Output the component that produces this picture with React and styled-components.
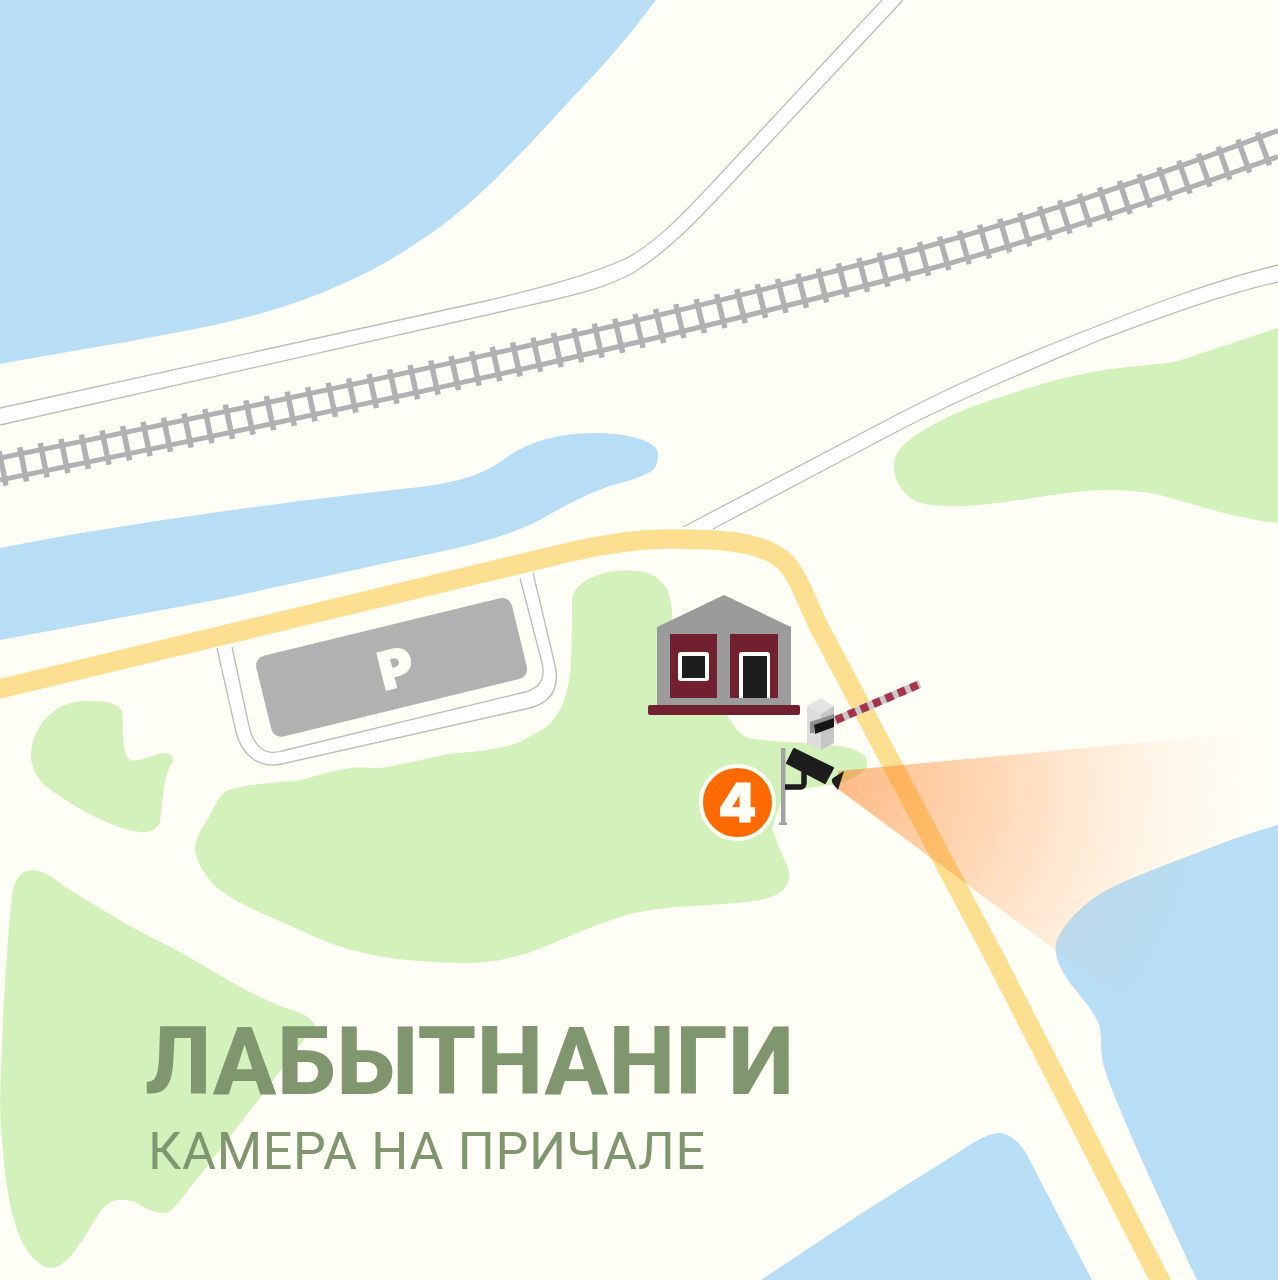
import styled, { createGlobalStyle } from "styled-components";

const GlobalStyle = createGlobalStyle`
  html, body { margin: 0; padding: 0; background: #fffef6; }
`;

const Canvas = styled.div`
  position: relative;
  width: 1278px;
  height: 1280px;
  overflow: hidden;
  background: #fffef6;
  font-family: "Roboto", "Liberation Sans", sans-serif;
`;

const MapArt = styled.svg`
  display: block;
  width: 1278px;
  height: 1280px;
`;

const Caption = styled.div`
  position: absolute;
  left: 145px;
  top: 1015px;
  color: #7f966f;
`;

const Title = styled.div`
  font-size: 94px;
  line-height: 94px;
  font-weight: 800;
  letter-spacing: 0.6px;
  white-space: nowrap;
`;

const Subtitle = styled.div`
  margin: 15px 0 0 3px;
  font-size: 52px;
  line-height: 56px;
  font-weight: 400;
  letter-spacing: 0.7px;
  white-space: nowrap;
`;

const Badge = styled.div`
  position: absolute;
  left: 699px;
  top: 764px;
  width: 69px;
  height: 69px;
  display: flex;
  align-items: center;
  justify-content: center;
  border: 4px solid #fffef6;
  border-radius: 50%;
  background: #ff6a00;
  color: #fffef6;
  font-family: "Inter", sans-serif;
  font-size: 54px;
  font-weight: 900;
  -webkit-text-stroke: 1px #fffef6;
`;

const WATER = "#b8def6";
const GREEN = "#d3f2bb";
const ROAD = "#fddf91";
const RAIL = "#b1b1b3";
const LINE = "#bcbcb8";
const MAROON = "#70202f";

const BAY =
  "M1278 825C1240 835 1205 850 1173 862C1150 871 1128 879 1107 890C1085 902 1065 922 1057 940C1053 952 1058 965 1068 980C1080 997 1095 1010 1100 1028C1102 1040 1100 1055 1105 1070C1120 1115 1165 1210 1197 1280H1278Z";

const Water = () => (
  <g fill={WATER}>
    <path d="M0 0H656C630 35 600 70 573 97C550 122 530 145 507 167C485 190 465 208 440 227C405 252 375 270 340 285C295 305 250 318 200 328C130 342 65 352 0 364Z" />
    <path d="M0 548C130 522 300 500 420 487C470 481 490 470 510 455C525 445 540 440 560 436C590 431 615 433 633 437C650 441 660 448 658 457C657 466 655 469 650 472C635 480 620 483 607 487C585 495 560 508 540 520C495 542 450 550 400 560C330 575 265 590 200 603C130 616 65 628 0 640Z" />
    <path d={BAY} />
    <path d="M761 1280L862 1213L962 1150C975 1141 988 1134 998 1133C1008 1133 1018 1140 1026 1153L1092 1280Z" />
  </g>
);

const Greens = () => (
  <g fill={GREEN}>
    <path d="M1278 328C1255 335 1235 343 1217 348C1190 357 1180 361 1167 363C1140 366 1110 368 1087 373C1050 380 1030 388 1000 397C975 405 950 415 933 425C910 437 893 450 894 467C894 482 905 497 920 503C935 507 950 506 967 506C990 505 1010 501 1033 498C1060 494 1085 490 1107 490C1130 490 1150 492 1167 497C1190 503 1210 510 1233 515C1250 519 1265 522 1278 523Z" />
    <path d="M572 600C574 578 610 566 645 572C662 577 671 590 672 610C672 650 705 690 727 715C733 725 738 733 748 738C770 742 790 742 807 743C825 745 845 745 858 751C870 757 870 768 860 774C850 780 840 783 830 785C810 788 795 789 785 791L772 828L780 850C785 862 791 870 789 880C785 892 775 897 760 900C730 905 695 905 667 908C650 910 635 912 620 917C605 922 590 928 577 933C555 942 535 952 513 957C495 962 480 963 467 963C440 963 400 960 383 957C345 950 320 940 300 930C275 918 235 905 213 884C205 875 195 860 195 849C195 840 200 830 210 815C215 805 220 795 226 791C240 785 270 783 300 780C320 775 335 770 350 768C360 767 370 768 380 768C400 765 420 760 443 755C460 752 475 752 487 750C505 747 515 745 527 738C540 731 548 727 553 720C562 710 570 690 571 660C572 640 572 620 572 600Z" />
    <path d="M31 753C33 725 55 702 83 701C100 700 118 702 122 711C124 725 120 750 130 760C140 763 155 753 165 753C174 754 175 760 171 765C164 775 163 800 160 822C157 830 150 833 140 832C110 828 70 805 43 784C36 775 30 765 31 753Z" />
    <path d="M33 870C22 870 14 878 12 895C6 950 2 1030 0 1103C2 1160 8 1200 14 1220C22 1250 38 1268 52 1268C70 1266 85 1235 100 1212C108 1200 120 1197 135 1202C145 1208 155 1214 165 1213C172 1212 177 1204 183 1197C220 1150 270 1085 315 1025C310 1015 298 1012 283 1007C240 990 205 965 167 945C130 928 95 905 67 888C55 880 45 870 33 870Z" />
  </g>
);

const ThinRoads = () => (
  <g fill="none">
    <g stroke="#ffffff" strokeWidth="15">
      <path d="M892.5 0L718 187.5C695 211 665 245 630 265.5C595 283 560 291 521 300L0 416.5" />
      <path d="M698 528L900 421.5C960 390 1030 361 1093 335C1155 311 1218 288 1278 273.5" />
      <path d="M224.5 648L242 729C248 750 262 762 282 757L528 700C546 695 553 683 549 664L527 575" />
    </g>
    <g stroke={LINE} strokeWidth="1.3">
      <path d="M882 0L713 182C690 206 660 240 627 258C590 275 540 288 490 300L0 408" />
      <path d="M903 0L723 193C700 217 670 250 633 273C600 290 580 293 553 300L0 425" />
      <path d="M683 527L900 413C960 382 1030 352 1087 330C1150 305 1215 280 1278 265" />
      <path d="M713 529L900 430C960 399 1030 370 1100 340C1160 318 1220 295 1278 282" />
      <path d="M217 648L236 732C242 755 258 769 282 764L530 708C552 702 560 688 555 665L533 573" />
      <path d="M232 647L249 726C254 747 265 756 282 751L525 692C540 688 546 678 542 663L520 578" />
    </g>
  </g>
);

const Rails = () => (
  <g fill="none" stroke={RAIL}>
    <path d="M0 469C160 437 400 386 540 354C680 322 800 292 920 260C1040 227 1160 187 1278 143.5" strokeWidth="35" strokeDasharray="5.5 15.5" />
    <path d="M0 458C160 426 400 375 540 343C680 311 800 281 920 248.5C1040 215 1160 175 1278 130.5" strokeWidth="5" />
    <path d="M0 480C160 448 400 397 540 365C680 333 800 303 920 271.5C1040 239 1160 199 1278 156.5" strokeWidth="5" />
  </g>
);

const Parking = () => (
  <g>
    <rect x="260" y="626" width="263" height="83" rx="10" fill="#b1b1b1" transform="rotate(-13.7 391 667)" />
    <text x="396" y="687" textAnchor="middle" fontFamily="Inter, sans-serif" fontWeight="900" fontSize="52" fill="#fffef6" stroke="#fffef6" strokeWidth="1.5" transform="rotate(-14 396 668)">
      P
    </text>
  </g>
);

const House = () => (
  <g>
    <path d="M657 627L724 595L791 627V705H657Z" fill="#9b9b9b" />
    <rect x="670" y="634" width="47" height="64" fill={MAROON} />
    <rect x="730" y="634" width="48" height="64" fill={MAROON} />
    <rect x="678" y="652" width="31" height="29" rx="3" fill="#fffef6" />
    <rect x="682" y="656" width="23" height="22" fill="#1d1d1d" />
    <path d="M739 698V655Q739 652 742 652H767Q770 652 770 655V698Z" fill="#fffef6" />
    <rect x="743" y="656" width="24" height="42" fill="#1d1d1d" />
    <rect x="648" y="705" width="152" height="10" rx="2" fill={MAROON} />
  </g>
);

const Barrier = () => (
  <g>
    <path d="M807 706L821 698L834 706L821 714Z" fill="#e4e4e4" />
    <path d="M807 706L821 714V750L807 743Z" fill="#dcdcdc" />
    <path d="M821 714L834 706V743L821 750Z" fill="#c6c6c6" />
    <path d="M834 721L920 684" stroke="#c9c9c9" strokeWidth="8" fill="none" />
    <path d="M836 720L920 684" stroke="#a8344c" strokeWidth="8" strokeDasharray="8 5.5" fill="none" />
    <path d="M810 722L834 714V720L814 727V733L810 733Z" fill="#8e8e8e" />
    <path d="M814 725L834 718V727L815 734Z" fill="#161616" />
  </g>
);

const Camera = () => (
  <g>
    <rect x="781" y="748" width="4.5" height="76" fill="#a3a3a3" />
    <rect x="779" y="822.5" width="8" height="2.5" fill="#a3a3a3" />
    <path d="M785 787H801C803 787 804 785 804 783V772" fill="none" stroke="#1d1d1d" strokeWidth="5.5" />
    <path d="M794 749L833 768L825 783L787 763Z" fill="#1d1d1d" stroke="#1d1d1d" strokeWidth="2" strokeLinejoin="round" />
    <path d="M844 771L833 778C831 780 832 782 833 784L838 790Z" fill="#1d1d1d" />
  </g>
);

const App = () => (
  <Canvas>
    <GlobalStyle />
    <MapArt viewBox="0 0 1278 1280" xmlns="http://www.w3.org/2000/svg">
      <defs>
        <radialGradient id="beamFade" gradientUnits="userSpaceOnUse" cx="838" cy="782" r="420">
          <stop offset="0" stopColor="#ff6a00" stopOpacity="0.46" />
          <stop offset="0.35" stopColor="#ff7a1a" stopOpacity="0.3" />
          <stop offset="0.75" stopColor="#ff8a3a" stopOpacity="0.08" />
          <stop offset="1" stopColor="#ff9a4a" stopOpacity="0" />
        </radialGradient>
      </defs>
      <Water />
      <Greens />
      <ThinRoads />
      <Rails />
      <path d="M-5 690L570 552C610 543 640 539 670 539C715 539 762 540 785 562C798 575 806 600 818 625L996 960L1165 1290" fill="none" stroke={ROAD} strokeWidth="19.5" />
      <Parking />
      <path d="M838 771L1278 730V1080L1150 1020L838 789Z" fill="url(#beamFade)" />
      <path d={BAY} fill={WATER} fillOpacity="0.55" />
      <House />
      <Barrier />
      <Camera />
    </MapArt>
    <Badge>4</Badge>
    <Caption>
      <Title>ЛАБЫТНАНГИ</Title>
      <Subtitle>КАМЕРА НА ПРИЧАЛЕ</Subtitle>
    </Caption>
  </Canvas>
);

export default App;
